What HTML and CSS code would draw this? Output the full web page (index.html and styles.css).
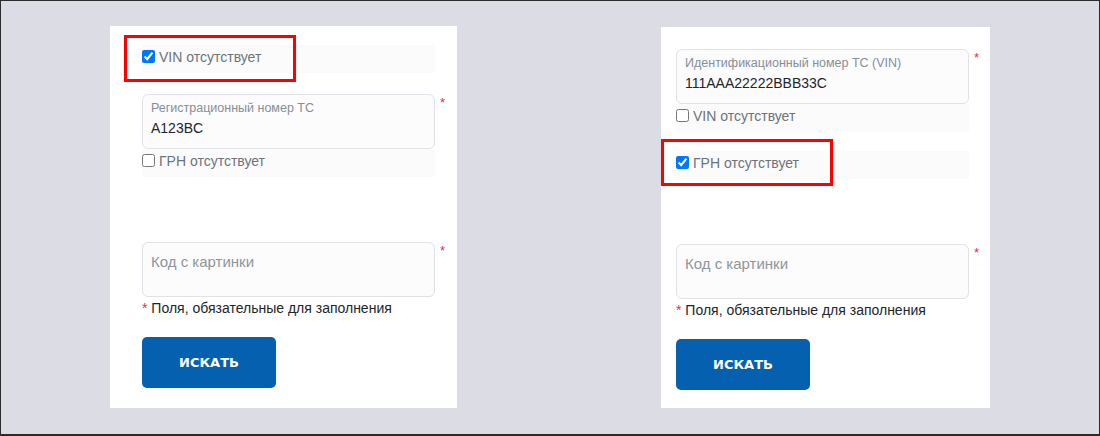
FILE: index.html
```html
<!DOCTYPE html>
<html lang="ru">
<head>
<meta charset="utf-8">
<title>Поиск</title>
<link rel="stylesheet" href="styles.css">
</head>
<body>
<div class="frame">
  <div class="card card-left">
    <div class="check-row check-row-first marked">
      <label class="check"><input type="checkbox" checked><span>VIN отсутствует</span></label>
      <span class="mark mark-left"></span>
    </div>
    <div class="field-row field-gap">
      <div class="field">
        <div class="field-label">Регистрационный номер ТС</div>
        <div class="field-value">A123BC</div>
      </div>
      <span class="req">*</span>
    </div>
    <div class="check-row">
      <label class="check"><input type="checkbox"><span>ГРН отсутствует</span></label>
    </div>
    <div class="field-row captcha-gap">
      <div class="field">
        <div class="field-placeholder">Код с картинки</div>
      </div>
      <span class="req">*</span>
    </div>
    <p class="note"><span class="note-star">*</span> Поля, обязательные для заполнения</p>
    <button class="btn" type="button">ИСКАТЬ</button>
  </div>

  <div class="card card-right">
    <div class="field-row">
      <div class="field">
        <div class="field-label">Идентификационный номер ТС (VIN)</div>
        <div class="field-value">111AAA22222BBB33C</div>
      </div>
      <span class="req">*</span>
    </div>
    <div class="check-row">
      <label class="check"><input type="checkbox"><span>VIN отсутствует</span></label>
    </div>
    <div class="check-row check-row-gap marked">
      <label class="check"><input type="checkbox" checked><span>ГРН отсутствует</span></label>
      <span class="mark mark-right"></span>
    </div>
    <div class="field-row captcha-gap">
      <div class="field">
        <div class="field-placeholder">Код с картинки</div>
      </div>
      <span class="req">*</span>
    </div>
    <p class="note"><span class="note-star">*</span> Поля, обязательные для заполнения</p>
    <button class="btn" type="button">ИСКАТЬ</button>
  </div>
</div>
</body>
</html>
```

FILE: styles.css
```css
* { box-sizing: border-box; }

html, body {
  margin: 0;
  padding: 0;
}

body {
  font-family: "Liberation Sans", Arial, sans-serif;
  font-size: 14px;
  color: #212529;
}

.frame {
  width: 1100px;
  height: 436px;
  border: 1px solid #2b2b2b;
  border-bottom-width: 2px;
  background: #dcdce4;
  display: flex;
  align-items: flex-start;
  padding: 25px 0 0 109px;
  gap: 204px;
}

.card {
  background: #ffffff;
  display: flex;
  flex-direction: column;
  align-items: flex-start;
}

.card-left {
  width: 347px;
  height: 382px;
  padding: 19px 0 0 32px;
}

.card-right {
  width: 329px;
  height: 381px;
  margin-top: 1px;
  padding: 22px 0 0 15px;
}

.check-row {
  width: 293px;
  height: 28px;
  background: #fbfbfc;
  padding-top: 5px;
}

.check-row-gap { margin-top: 19px; }

.marked { position: relative; }

.check {
  display: flex;
  align-items: flex-start;
  color: #6c737a;
  font-size: 14px;
  line-height: 16px;
}

.check input {
  width: 13px;
  height: 13px;
  margin: 0 4px 0 0;
  flex: none;
}

.check span { margin-top: -1px; }

.mark {
  position: absolute;
  width: 172px;
  height: 47px;
  border: 3px solid #ff0000;
}

.mark-left { left: -18px; top: -10px; }
.mark-right { left: -15px; top: -12px; }

.field-row {
  display: flex;
  align-items: flex-start;
}

.field-gap { margin-top: 21px; }
.captcha-gap { margin-top: 65px; }

.field {
  width: 293px;
  height: 55px;
  border: 1px solid #dfe2e6;
  border-radius: 6px;
  background: #fcfcfd;
  padding: 5px 8px 0;
}

.field-label {
  font-size: 12.5px;
  line-height: 16px;
  color: #868e96;
}

.field-value {
  margin-top: 3px;
  font-size: 14px;
  line-height: 18px;
  color: #212529;
}

.field-placeholder {
  padding-top: 4px;
  font-size: 15px;
  line-height: 20px;
  color: #8e959c;
}

.req {
  margin-left: 5px;
  margin-top: 2px;
  color: #d9343f;
  font-size: 13px;
  line-height: 14px;
}

.note {
  margin: 3px 0 0;
  font-size: 14px;
  line-height: 16px;
  color: #212529;
}

.note-star { color: #d9343f; }

.btn {
  margin-top: 21px;
  width: 134px;
  height: 51px;
  border: 0;
  border-radius: 5px;
  background: #0560b0;
  color: #ffffff;
  font-family: "DejaVu Sans", Verdana, sans-serif;
  font-weight: 700;
  font-size: 13px;
  padding: 0;
}
```
